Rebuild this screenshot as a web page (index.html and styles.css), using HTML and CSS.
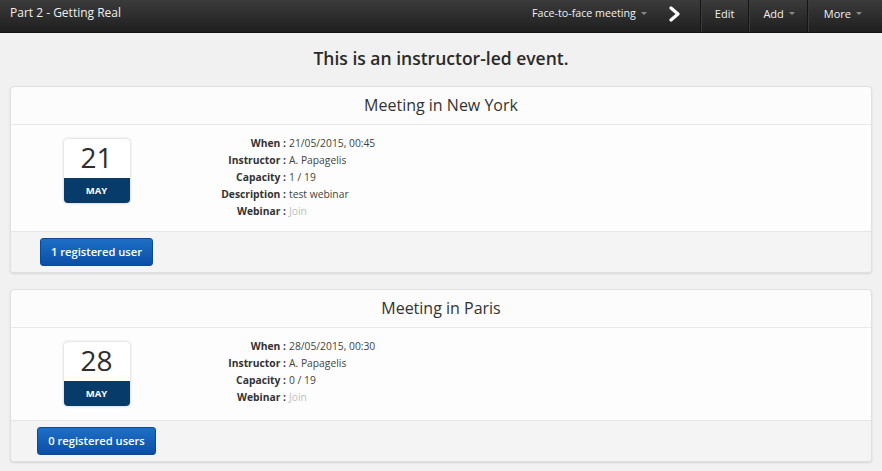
FILE: index.html
```html
<!DOCTYPE html>
<html>
<head>
<meta charset="utf-8">
<link rel="stylesheet" href="styles.css">
</head>
<body>
<header class="topbar">
  <div class="brand">Part 2 - Getting Real</div>
  <nav class="menu">
    <div class="item item-type">Face-to-face meeting <span class="caret"></span></div>
    <div class="item item-next">
      <svg width="13" height="16" viewBox="0 0 13 16"><path d="M3 2 L10 8 L3 14" fill="none" stroke="#fff" stroke-width="3.2" stroke-linecap="round" stroke-linejoin="round"/></svg>
    </div>
    <div class="item sep item-edit">Edit</div>
    <div class="item sep item-add">Add <span class="caret"></span></div>
    <div class="item sep item-more">More <span class="caret"></span></div>
  </nav>
</header>

<main class="content">
  <h1 class="intro">This is an instructor-led event.</h1>

  <section class="card">
    <div class="card-title">Meeting in New York</div>
    <div class="card-body">
      <div class="date-col">
        <div class="cal">
          <div class="cal-day">21</div>
          <div class="cal-month">MAY</div>
        </div>
      </div>
      <dl class="details">
        <dt>When :</dt><dd>21/05/2015, 00:45</dd>
        <dt>Instructor :</dt><dd>A. Papagelis</dd>
        <dt>Capacity :</dt><dd>1 / 19</dd>
        <dt>Description :</dt><dd>test webinar</dd>
        <dt>Webinar :</dt><dd class="muted">Join</dd>
      </dl>
    </div>
    <div class="card-foot">
      <div class="date-col"><button class="btn">1 registered user</button></div>
    </div>
  </section>

  <section class="card">
    <div class="card-title">Meeting in Paris</div>
    <div class="card-body">
      <div class="date-col">
        <div class="cal">
          <div class="cal-day">28</div>
          <div class="cal-month">MAY</div>
        </div>
      </div>
      <dl class="details">
        <dt>When :</dt><dd>28/05/2015, 00:30</dd>
        <dt>Instructor :</dt><dd>A. Papagelis</dd>
        <dt>Capacity :</dt><dd>0 / 19</dd>
        <dt>Webinar :</dt><dd class="muted">Join</dd>
      </dl>
    </div>
    <div class="card-foot">
      <div class="date-col"><button class="btn">0 registered users</button></div>
    </div>
  </section>
</main>
</body>
</html>
```

FILE: styles.css
```css
* { box-sizing: border-box; }
html, body { margin: 0; padding: 0; }
body {
  font-family: "Open Sans", "Noto Sans", sans-serif;
  background: #f1f1f1;
  color: #333;
  width: 882px;
  height: 471px;
  overflow: hidden;
}

.topbar {
  height: 33px;
  display: flex;
  align-items: stretch;
  justify-content: space-between;
  background: linear-gradient(#3b3b3b, #1f1f1f);
  border-bottom: 1px solid #141414;
  color: #f0f0f0;
}
.brand {
  padding-left: 10px;
  font-size: 12px;
  line-height: 26px;
}
.menu {
  display: flex;
  align-items: stretch;
}
.item {
  display: flex;
  align-items: center;
  font-size: 11px;
  padding: 0 14px 6px;
  white-space: nowrap;
}
.item-type { font-size: 10.7px; padding-right: 21px; }
.item-next { padding: 0 19px 5px 0; }
.sep { border-left: 1px solid #151515; box-shadow: inset 1px 0 0 #3a3a3a; }
.item-edit { padding: 0 14px 6px 14px; }
.item-add { padding: 0 12px 6px 14px; }
.item-more { padding: 0 20px 6px 16px; }
.caret {
  display: inline-block;
  width: 0; height: 0;
  margin-left: 5px;
  margin-top: 1px;
  border-left: 3px solid transparent;
  border-right: 3px solid transparent;
  border-top: 3px solid #8a8a8a;
}

.content {
  padding: 0 10px;
}
.intro {
  margin: 0;
  height: 53px;
  padding-top: 12px;
  text-align: center;
  font-size: 17.5px;
  font-weight: 600;
  line-height: 26px;
  color: #2a2a2a;
}

.card {
  background: #fcfcfc;
  border: 1px solid #e0e0e0;
  border-radius: 4px;
  box-shadow: 0 1px 2px rgba(0,0,0,0.12);
  margin-bottom: 16px;
  overflow: hidden;
}
.card-title {
  height: 38px;
  text-align: center;
  font-size: 16px;
  line-height: 37px;
  color: #333;
  border-bottom: 1px solid #e9e9e9;
}
.card-body {
  display: flex;
  align-items: flex-start;
  padding: 10px 0 11px;
  background: #fdfdfd;
}
.date-col {
  width: 171px;
  display: flex;
  justify-content: center;
  flex: none;
}
.cal {
  width: 66px;
  margin: 4px 0 3px;
  border-radius: 4px;
  overflow: hidden;
  box-shadow: 0 0 3px rgba(0,0,0,0.25);
  background: #fff;
}
.cal-day {
  height: 39px;
  text-align: center;
  font-size: 28px;
  line-height: 37px;
  color: #2e2e2e;
}
.cal-month {
  height: 25px;
  background: #073b6a;
  color: #fff;
  text-align: center;
  font-size: 9.5px;
  font-weight: 700;
  line-height: 25px;
}

.details {
  margin: 0;
  display: grid;
  grid-template-columns: 104px auto;
  column-gap: 3px;
  font-size: 10.3px;
  line-height: 17px;
}
.details dt {
  text-align: right;
  font-weight: 700;
  color: #333;
}
.details dd {
  margin: 0;
  color: #444;
}
.details dd.muted { color: #bdbdbd; }

.card-foot {
  background: #f4f4f4;
  border-top: 1px solid #e6e6e6;
  padding: 6px 0;
  display: flex;
}
.btn {
  height: 28px;
  padding: 0 10px;
  border: 1px solid #0a4a9a;
  border-radius: 3px;
  background: linear-gradient(#1e6fc6, #0b4ea6);
  color: #fff;
  font-family: "Open Sans", "Noto Sans", sans-serif;
  font-size: 11.2px;
  font-weight: 600;
  line-height: 26px;
}
```
